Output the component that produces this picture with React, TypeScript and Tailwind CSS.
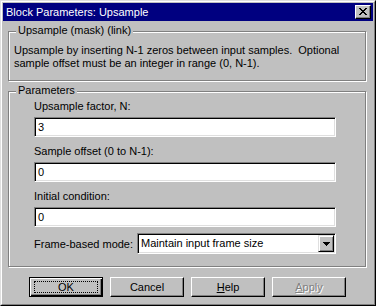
import React from 'react';

const sunken =
  'border border-t-[#808080] border-l-[#808080] border-r-white border-b-white shadow-[inset_1px_1px_0_#000,inset_-1px_-1px_0_#dfdfdf] bg-white';

interface GroupBoxProps {
  label: string;
  className?: string;
  children: React.ReactNode;
}

const GroupBox: React.FC<GroupBoxProps> = ({ label, className, children }) => (
  <div
    className={`relative w-[358px] border border-[#808080] shadow-[inset_1px_1px_0_#fff,1px_1px_0_#fff] ${className ?? ''}`}
  >
    <span className="absolute -top-[8px] left-[7px] bg-[#c0c0c0] px-[2px] leading-[13px]">{label}</span>
    {children}
  </div>
);

const Field: React.FC<{ label: string; value: string }> = ({ label, value }) => (
  <div className="flex flex-col">
    <label className="leading-[13px]">{label}</label>
    <div className={`mt-[4px] flex h-[20px] items-center px-[2px] ${sunken}`}>
      <span className="pl-[1px] leading-[13px]">{value}</span>
    </div>
  </div>
);

const DialogButton: React.FC<{ children: React.ReactNode; primary?: boolean; disabled?: boolean }> = ({
  children,
  primary,
  disabled,
}) => (
  <button
    type="button"
    className={`relative flex h-[20px] w-[74px] items-center justify-center bg-[#c0c0c0] leading-[13px] ${
      primary
        ? 'border border-black shadow-[inset_1px_1px_0_#fff,inset_-1px_-1px_0_#000,inset_-2px_-2px_0_#808080]'
        : 'border border-t-white border-l-white border-r-black border-b-black shadow-[inset_-1px_-1px_0_#808080]'
    } ${disabled ? 'text-[#808080] [text-shadow:1px_1px_0_#fff]' : 'text-black'}`}
  >
    {primary ? <span className="absolute inset-x-[4px] inset-y-[3px] border border-dotted border-black" /> : null}
    <span className="relative">{children}</span>
  </button>
);

const App: React.FC = () => {
  return (
    <div className="h-[306px] w-[376px] bg-[#c0c0c0] font-['Liberation_Sans',Arial,sans-serif] text-[11px] text-black">
      <div className="h-full border border-t-[#dfdfdf] border-l-[#dfdfdf] border-r-black border-b-black">
        <div className="h-full border border-t-white border-l-white border-r-[#808080] border-b-[#808080] p-[1px]">
          {/* title bar */}
          <div className="flex h-[18px] items-center justify-between bg-[#000080] pl-[3px] pr-[2px]">
            <span className="leading-[13px] text-white">Block Parameters: Upsample</span>
            <button
              type="button"
              className="flex h-[14px] w-[16px] items-center justify-center border border-t-white border-l-white border-r-black border-b-black bg-[#c0c0c0] shadow-[inset_-1px_-1px_0_#808080]"
            >
              <svg width="8" height="7" viewBox="0 0 8 7" shapeRendering="crispEdges" className="mb-[1px]">
                <path
                  d="M0 0h2v1H0zM6 0h2v1H6zM1 1h2v1H1zM5 1h2v1H5zM2 2h4v1H2zM3 3h2v1H3zM2 4h4v1H2zM1 5h2v1H1zM5 5h2v1H5zM0 6h2v1H0zM6 6h2v1H6z"
                  fill="#000"
                />
              </svg>
            </button>
          </div>

          <div className="flex flex-col px-[5px]">
            <GroupBox label="Upsample (mask) (link)" className="mt-[10px] h-[50px]">
              <p className="pl-[5px] pt-[12px] leading-[13px] whitespace-pre">
                {'Upsample by inserting N-1 zeros between input samples.  Optional\nsample offset must be an integer in range (0, N-1).'}
              </p>
            </GroupBox>

            <GroupBox label="Parameters" className="mt-[10px] h-[176px]">
              <div className="flex flex-col gap-[8px] pl-[25px] pr-[29px] pt-[8px]">
                <Field label="Upsample factor, N:" value="3" />
                <Field label="Sample offset (0 to N-1):" value="0" />
                <Field label="Initial condition:" value="0" />
                <div className="mt-[-2px] flex items-center">
                  <span className="w-[103px] pt-[2px] leading-[13px]">Frame-based mode:</span>
                  <div className={`flex h-[21px] flex-1 items-center pl-[3px] ${sunken}`}>
                    <span className="flex-1 leading-[13px]">Maintain input frame size</span>
                    <span className="mr-[1px] flex h-[17px] w-[16px] items-center justify-center border border-t-[#dfdfdf] border-l-[#dfdfdf] border-r-black border-b-black bg-[#c0c0c0] shadow-[inset_1px_1px_0_#fff,inset_-1px_-1px_0_#808080]">
                      <svg width="7" height="4" viewBox="0 0 7 4" shapeRendering="crispEdges">
                        <path d="M0 0h7v1H0zM1 1h5v1H1zM2 2h3v1H2zM3 3h1v1H3z" fill="#000" />
                      </svg>
                    </span>
                  </div>
                </div>
              </div>
            </GroupBox>

            <div className="mt-[10px] flex gap-[7px] pl-[21px]">
              <DialogButton primary>OK</DialogButton>
              <DialogButton>Cancel</DialogButton>
              <DialogButton>
                <span className="underline">H</span>elp
              </DialogButton>
              <DialogButton disabled>
                <span className="underline">A</span>pply
              </DialogButton>
            </div>
          </div>
        </div>
      </div>
    </div>
  );
};

export default App;
